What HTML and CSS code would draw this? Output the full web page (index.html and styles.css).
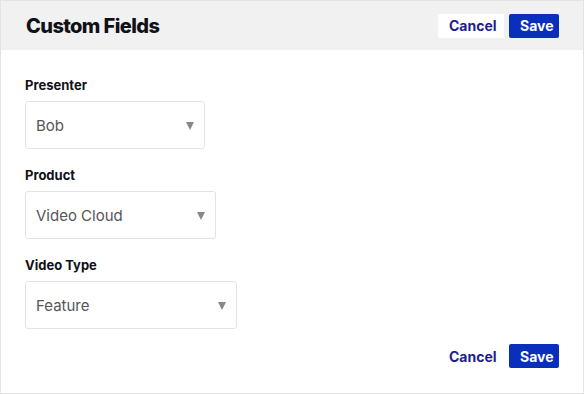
FILE: index.html
```html
<!DOCTYPE html>
<html lang="en">
<head>
  <meta charset="UTF-8">
  <title>Custom Fields</title>
  <link rel="stylesheet" href="styles.css">
</head>
<body>
  <div class="panel">
    <div class="panel-header">
      <h1>Custom Fields</h1>
      <div class="actions">
        <button class="btn btn-cancel on-header">Cancel</button>
        <button class="btn btn-save">Save</button>
      </div>
    </div>

    <div class="panel-body">
      <div class="field">
        <label>Presenter</label>
        <div class="select select-presenter"><span>Bob</span><span class="caret"></span></div>
      </div>
      <div class="field">
        <label>Product</label>
        <div class="select select-product"><span>Video Cloud</span><span class="caret"></span></div>
      </div>
      <div class="field">
        <label>Video Type</label>
        <div class="select select-type"><span>Feature</span><span class="caret"></span></div>
      </div>

      <div class="actions footer-actions">
        <button class="btn btn-cancel">Cancel</button>
        <button class="btn btn-save">Save</button>
      </div>
    </div>
  </div>
</body>
</html>
```

FILE: styles.css
```css
:root {
  --border: #e3e3e3;
  --header-bg: #f1f1f1;
  --text: #111118;
  --muted: #555;
  --caret: #888;
  --blue: #0a2fbd;
  --navy: #1c1f8c;
}
* {
  box-sizing: border-box;
}
body {
  margin: 0;
  font-family: 'Inter', 'Liberation Sans', sans-serif;
  color: var(--text);
  background: #fff;
}
.panel {
  width: 584px;
  height: 394px;
  border: 1px solid var(--border);
  display: flex;
  flex-direction: column;
}
.panel-header {
  height: 49px;
  background-color: var(--header-bg);
  display: flex;
  align-items: center;
  justify-content: space-between;
  padding: 0 24px 0 25px;
}
h1 {
  margin: 0;
  font-size: 20px;
  font-weight: 800;
  letter-spacing: -0.6px;
}
.actions {
  display: flex;
  gap: 5px;
  justify-content: flex-end;
}
.btn {
  height: 24px;
  border: none;
  border-radius: 2px;
  font-family: inherit;
  font-size: 14px;
  font-weight: 700;
  padding: 0 11px;
  cursor: pointer;
}
.btn-cancel {
  width: 66px;
  background: transparent;
  color: var(--navy);
}
.btn-cancel.on-header {
  background: #fff;
}
.btn-save {
  width: 50px;
  background: var(--blue);
  color: #fff;
}
.panel-body {
  padding: 27px 24px 0 24px;
}
.field {
  margin-bottom: 18px;
}
.field label {
  display: block;
  font-size: 13px;
  font-weight: 700;
  line-height: 16px;
  margin-bottom: 8px;
}
.select {
  height: 48px;
  border: 1px solid var(--border);
  border-radius: 3px;
  display: flex;
  align-items: center;
  justify-content: space-between;
  padding: 0 10px 0 10px;
  font-size: 15px;
  color: var(--muted);
}
.select-presenter { width: 180px; }
.select-product { width: 191px; }
.select-type { width: 212px; }
.caret {
  width: 0;
  height: 0;
  border-left: 4.5px solid transparent;
  border-right: 4.5px solid transparent;
  border-top: 8px solid var(--caret);
  margin-top: 1px;
}
.footer-actions {
  margin-top: -3px;
}
```
